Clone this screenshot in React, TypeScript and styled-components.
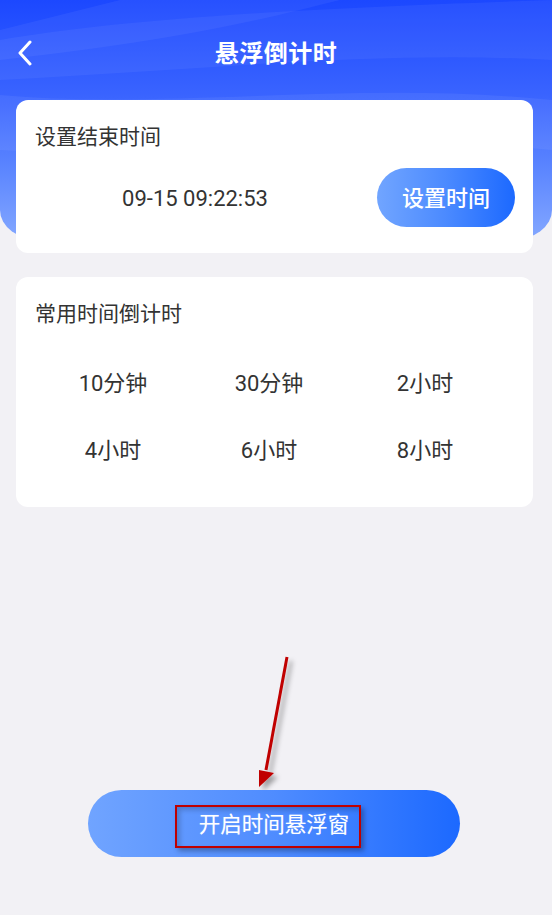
import styled, { createGlobalStyle } from "styled-components";

const GlobalStyle = createGlobalStyle`
    html, body {
        margin: 0;
        padding: 0;
        background: #f2f1f5;
    }
    * {
        box-sizing: border-box;
    }
`;

const presets = ["10分钟", "30分钟", "2小时", "4小时", "6小时", "8小时"];

export default function App() {
    return (
        <Page>
            <GlobalStyle />
            <Backdrop>
                <svg width="552" height="240" viewBox="0 0 552 240" preserveAspectRatio="none">
                    <path d="M0 40 C120 20 260 10 552 0 L552 60 C380 50 200 70 0 80 Z" fill="#ffffff" opacity="0.05" />
                    <path d="M0 95 C160 110 360 80 552 100 L552 150 C360 130 180 160 0 150 Z" fill="#ffffff" opacity="0.06" />
                    <path d="M120 0 L340 0 C260 20 180 40 0 60 L0 30 Z" fill="#ffffff" opacity="0.05" />
                </svg>
            </Backdrop>

            <NavBar>
                <BackButton aria-label="返回">
                    <svg width="16" height="26" viewBox="0 0 16 26">
                        <polyline points="13,2 3,13 13,24" fill="none" stroke="#ffffff" strokeWidth="3" strokeLinecap="round" strokeLinejoin="round" />
                    </svg>
                </BackButton>
                <NavTitle>悬浮倒计时</NavTitle>
            </NavBar>

            <Card>
                <CardTitle>设置结束时间</CardTitle>
                <TimeRow>
                    <TimeValue>09-15 09:22:53</TimeValue>
                    <SetButton>设置时间</SetButton>
                </TimeRow>
            </Card>

            <Card $gap={24}>
                <CardTitle>常用时间倒计时</CardTitle>
                <PresetGrid>
                    {presets.map((p) => (
                        <PresetItem key={p}>{p}</PresetItem>
                    ))}
                </PresetGrid>
            </Card>

            <Arrow width="60" height="150" viewBox="0 0 60 150">
                <defs>
                    <filter id="arrowShadow" x="-50%" y="-20%" width="200%" height="140%">
                        <feDropShadow dx="4" dy="4" stdDeviation="2.5" floodColor="#000000" floodOpacity="0.35" />
                    </filter>
                </defs>
                <g filter="url(#arrowShadow)">
                    <line x1="42" y1="7" x2="21" y2="120" stroke="#c00000" strokeWidth="3" />
                    <polygon points="14,120 29,123 14,137" fill="#c00000" />
                </g>
            </Arrow>

            <StartButton>
                <StartLabel>开启时间悬浮窗</StartLabel>
                <Highlight />
            </StartButton>
        </Page>
    );
}

const Page = styled.div`
    position: relative;
    display: flex;
    flex-direction: column;
    width: 552px;
    min-height: 915px;
    overflow: hidden;
    font-family: Roboto, "Noto Sans CJK SC", sans-serif;
`;

const Backdrop = styled.div`
    position: absolute;
    top: 0;
    left: 0;
    width: 100%;
    height: 240px;
    border-radius: 0 0 40px 40px / 0 0 30px 30px;
    background: linear-gradient(180deg, #1c48ff 0%, #3a64ff 40%, #5b85ff 70%, #84a8ff 100%);
    overflow: hidden;
    svg {
        display: block;
    }
`;

const NavBar = styled.div`
    position: relative;
    display: flex;
    align-items: center;
    justify-content: center;
    height: 100px;
    padding-top: 2px;
`;

const BackButton = styled.button`
    position: absolute;
    left: 17px;
    top: 40px;
    display: flex;
    padding: 0;
    border: none;
    background: transparent;
`;

const NavTitle = styled.div`
    color: #ffffff;
    font-family: "Noto Sans CJK SC", sans-serif;
    font-size: 24px;
    font-weight: 700;
    letter-spacing: 0.5px;
`;

const Card = styled.div<{ $gap?: number }>`
    position: relative;
    margin: ${({ $gap }) => $gap ?? 0}px 19px 0 16px;
    padding: 24px 18px 24px 19px;
    background: #ffffff;
    border-radius: 12px;
`;

const CardTitle = styled.div`
    font-size: 21px;
    line-height: 26px;
    color: #333333;
`;

const TimeRow = styled.div`
    display: flex;
    align-items: center;
    gap: 22px;
    margin-top: 18px;
    margin-bottom: 2px;
`;

const TimeValue = styled.div`
    flex: 1;
    text-align: center;
    font-size: 22px;
    color: #333333;
    padding-top: 2px;
`;

const SetButton = styled.button`
    width: 138px;
    height: 59px;
    border: none;
    border-radius: 30px;
    padding: 0 0 4px 0;
    background: linear-gradient(90deg, #71a5ff 0%, #4b8aff 50%, #1c69ff 100%);
    color: #ffffff;
    font-family: "Noto Sans CJK SC", sans-serif;
    font-size: 22px;
    font-weight: 500;
`;

const PresetGrid = styled.div`
    display: grid;
    grid-template-columns: repeat(3, 156px);
    grid-auto-rows: 67px;
    margin-top: 20px;
    margin-bottom: 2px;
`;

const PresetItem = styled.div`
    display: flex;
    align-items: center;
    justify-content: center;
    font-size: 22px;
    color: #333333;
`;

const Arrow = styled.svg`
    position: absolute;
    left: 245px;
    top: 650px;
`;

const StartButton = styled.button`
    position: relative;
    display: flex;
    align-items: center;
    justify-content: center;
    width: 372px;
    height: 67px;
    margin: auto 0 58px 88px;
    border: none;
    border-radius: 34px;
    background: linear-gradient(90deg, #70a4ff 0%, #4f8cff 50%, #1c69ff 100%);
    padding: 0 0 2px 0;
`;

const StartLabel = styled.span`
    color: #ffffff;
    font-family: "Noto Sans CJK SC", sans-serif;
    font-size: 21.5px;
    text-shadow: 0 0 1px rgba(255, 255, 255, 0.4);
`;

const Highlight = styled.div`
    position: absolute;
    left: 87px;
    top: 15px;
    width: 186px;
    height: 43px;
    border: 2px solid #c00000;
    box-shadow: 3px 3px 5px rgba(0, 0, 0, 0.3), inset 3px 3px 5px rgba(0, 0, 0, 0.2);
`;
